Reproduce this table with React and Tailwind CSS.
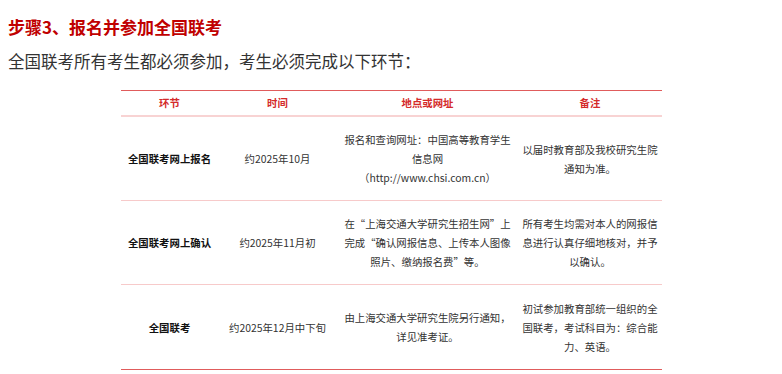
export default function App() {
  const font = { fontFamily: '"Noto Sans CJK SC", "Noto Sans", sans-serif' };
  const rows = [
    {
      a: "全国联考网上报名",
      b: "约2025年10月",
      c: ["报名和查询网址：中国高等教育学生", "信息网", "（http://www.chsi.com.cn）"],
      d: ["以届时教育部及我校研究生院", "通知为准。"],
    },
    {
      a: "全国联考网上确认",
      b: "约2025年11月初",
      c: ["在“上海交通大学研究生招生网”上", "完成“确认网报信息、上传本人图像", "照片、缴纳报名费”等。"],
      d: ["所有考生均需对本人的网报信", "息进行认真仔细地核对，并予", "以确认。"],
    },
    {
      a: "全国联考",
      b: "约2025年12月中下旬",
      c: ["由上海交通大学研究生院另行通知，", "详见准考证。"],
      d: ["初试参加教育部统一组织的全", "国联考，考试科目为：综合能", "力、英语。"],
    },
  ];
  return (
    <div className="w-[782px] h-[374px] bg-white overflow-hidden" style={font}>
      <div className="pl-[8px] pt-[16px]">
        <div className="text-[17px] leading-[22px] font-bold text-[#c00000]">步骤3、报名并参加全国联考</div>
        <div className="mt-[12px] text-[16.5px] leading-[22px] text-[#333333]">全国联考所有考生都必须参加，考生必须完成以下环节：</div>
      </div>
      <div className="mt-[18px] mx-auto w-[541px] border-t border-b border-[#e05c5c]">
        <div className="grid grid-cols-[98px_118px_182px_143px] h-[26px] items-center border-b-2 border-[#f8d3d3] text-[10.4px] font-bold text-[#d42a2a] text-center">
          <div>环节</div>
          <div>时间</div>
          <div>地点或网址</div>
          <div>备注</div>
        </div>
        {rows.map((r, i) => (
          <div
            key={i}
            className={`grid grid-cols-[98px_118px_182px_143px] h-[84px] items-center text-center text-[10.4px] leading-[19px] text-[#333333] ${i < 2 ? "border-b border-[#f7caca]" : ""}`}
          >
            <div className="font-bold text-[#111111] whitespace-nowrap">{r.a}</div>
            <div className="whitespace-nowrap">{r.b}</div>
            <div className="whitespace-nowrap">
              {r.c.map((l, j) => (
                <div key={j}>{l}</div>
              ))}
            </div>
            <div className="whitespace-nowrap">
              {r.d.map((l, j) => (
                <div key={j}>{l}</div>
              ))}
            </div>
          </div>
        ))}
      </div>
    </div>
  );
}
